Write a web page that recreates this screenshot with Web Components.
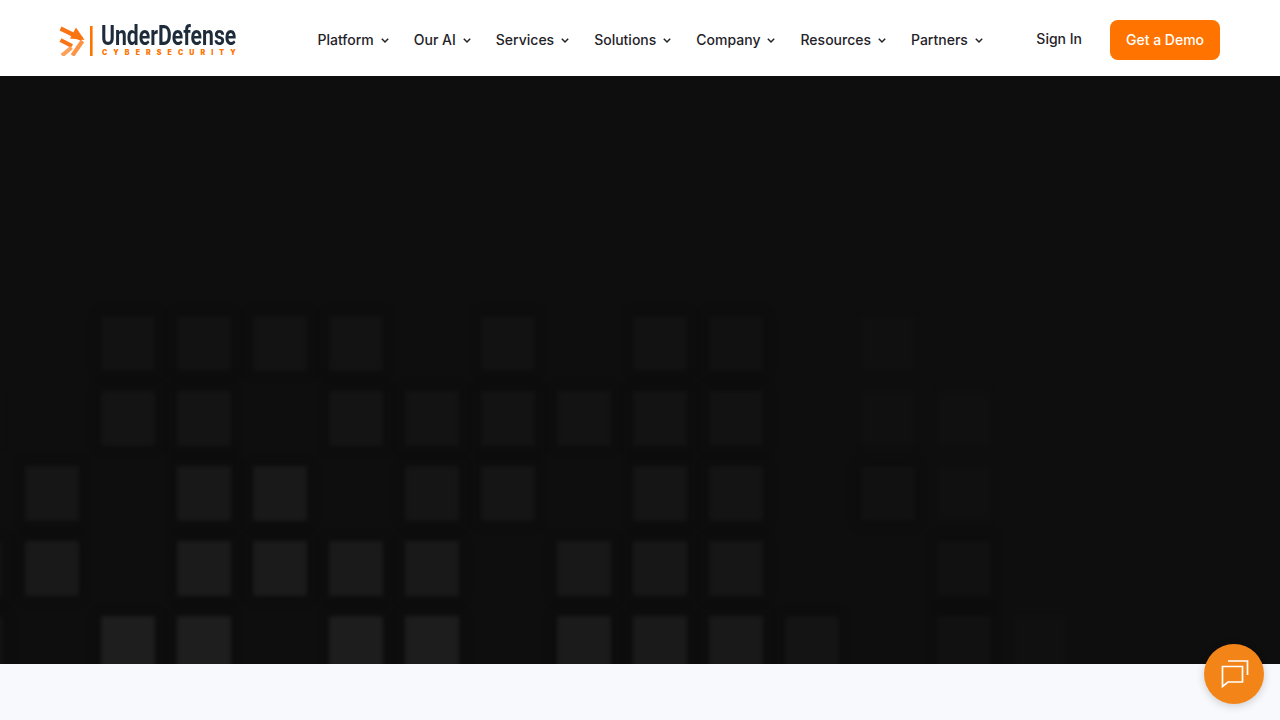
<!DOCTYPE html>
<html lang="en"><head><meta charset="utf-8"><title>UnderDefense</title>
<style>html,body{margin:0;height:100%;overflow:hidden;background:#f8f9fd;font-family:Inter,"Liberation Sans",sans-serif}
ud-page{display:flex;flex-direction:column;height:720px}</style></head><body>
<ud-page>
  <ud-header slot="header">
    <ud-logo slot="logo"></ud-logo>
    <ud-nav-item>Platform</ud-nav-item><ud-nav-item>Our AI</ud-nav-item><ud-nav-item>Services</ud-nav-item><ud-nav-item>Solutions</ud-nav-item><ud-nav-item>Company</ud-nav-item><ud-nav-item>Resources</ud-nav-item><ud-nav-item>Partners</ud-nav-item>
  </ud-header>
  <ud-hero></ud-hero>
  <ud-band></ud-band>
</ud-page>
<ud-chat></ud-chat>
<script>
function def(name,html,init){customElements.define(name,class extends HTMLElement{constructor(){super();this.attachShadow({mode:'open'}).innerHTML=html;if(init)init(this.shadowRoot)}})}
def('ud-page',`<style>:host{display:flex;flex-direction:column;height:720px}</style><slot name="header"></slot><slot></slot>`);
def('ud-logo',`<style>
:host{display:flex;align-items:flex-start;width:178px;height:32px;flex:none}
svg{display:block;flex:none}
.w{display:flex;flex-direction:column;margin-left:8px;width:136px;height:32px}
.n{font:700 27px/24px Roboto,sans-serif;color:#1d2b3a;white-space:nowrap;transform:scaleX(.785);transform-origin:0 0;height:26px;width:136px}
.c{font:900 7px/6px Inter,sans-serif;color:#ff7300;letter-spacing:6.1px;white-space:nowrap;height:6px;width:136px;padding-left:1px}
</style>
<svg width="34" height="32" viewBox="59 24 34 32"><g fill="none" stroke-linecap="butt" stroke-width="4.200">
<path d="M60.500 28.500 82 39" stroke="#fb7413"/><path d="M60.500 40 72 46" stroke="#fb7413"/>
<path d="M71.500 47.500 62 55.500" stroke="#fda05a"/><path d="M82.500 41 72.500 55.500" stroke="#fd9445"/></g>
<path d="M76 27.500 84.500 40 70 38.500Z" fill="#fb7413"/>
<rect x="90" y="26" width="2.600" height="30" fill="#ff7300"/></svg>
<div class="w"><div class="n">UnderDefense</div><div class="c">CYBERSECURITY</div></div>`);
def('ud-header',`<style>
:host{display:flex;align-items:center;height:76px;padding:4px 60px 0 59px;background:#fff;flex:none;box-sizing:border-box}
nav{display:flex;gap:22px;margin-left:80.5px}
.s{margin-left:auto;font:500 14px/20px Inter,sans-serif;color:#1f2328;margin-top:-2px}
.b{margin-left:28px;width:110px;height:40px;border-radius:8px;background:#ff7300;color:#fff;font:500 14px/40px Inter,sans-serif;text-align:center}
</style><slot name="logo"></slot><nav><slot></slot></nav><div class="s">Sign In</div><div class="b">Get a Demo</div>`);
def('ud-nav-item',`<style>
:host{display:flex;align-items:center;gap:4px;font:500 14px/20px Inter,sans-serif;color:#1f2328;white-space:nowrap}
svg{display:block}</style><slot></slot><svg width="14" height="14" viewBox="0 0 14 14"><path d="M3.800 5.800 7 9l3.200-3.200" fill="none" stroke="#1f2328" stroke-width="1.500"/></svg>`);
def('ud-band',`<style>:host{display:block;height:56px;background:#f8f9fd;flex:none}</style>`);
def('ud-hero',`<style>
:host{display:block;height:588px;flex:none;background:#0e0e0e;overflow:hidden}
.g{display:grid;grid-template-columns:repeat(15,54px);grid-auto-rows:55px;column-gap:22px;row-gap:20px;margin-left:-51px;padding-top:240px}
i{display:block;filter:blur(2px);box-shadow:0 0 7px 3px #0c0c0c}
i.o{background:none;box-shadow:none}
</style><div class="g"></div>`,r=>{
 const rows=[
  [0,0,18,18,19,19,0,18,0,18,17,0,16,0,0],
  [15,0,20,20,0,20,19,19,19,19,18,0,16,16,0],
  [0,22,0,24,25,0,21,21,0,21,20,0,17,16,0],
  [18,25,0,27,27,26,25,0,24,23,22,0,0,17,0],
  [19,0,30,30,0,29,29,0,27,26,25,20,0,17,16]];
 const g=r.querySelector('.g');
 rows.forEach(R=>R.forEach(v=>{const e=document.createElement('i');
  if(v){e.style.background=`rgb(${v},${v},${v})`;if(v<17)e.style.boxShadow='none'}else e.className='o';g.appendChild(e)}));
});
def('ud-chat',`<style>
:host{position:fixed;left:1204px;top:644px;width:60px;height:60px;border-radius:50%;background:#f38518;box-shadow:0 2px 8px rgba(0,0,0,.18);display:flex;align-items:center;justify-content:center}
svg{display:block}</style>
<svg width="60" height="60" viewBox="1204 644 60 60" fill="none" stroke="#fff" stroke-width="1.700"><path d="M1228 661H1247.500V675"/><path d="M1222.500 666.500H1242.500V682H1228L1222.500 686.500V666.500Z"/></svg>`);
</script></body></html>
